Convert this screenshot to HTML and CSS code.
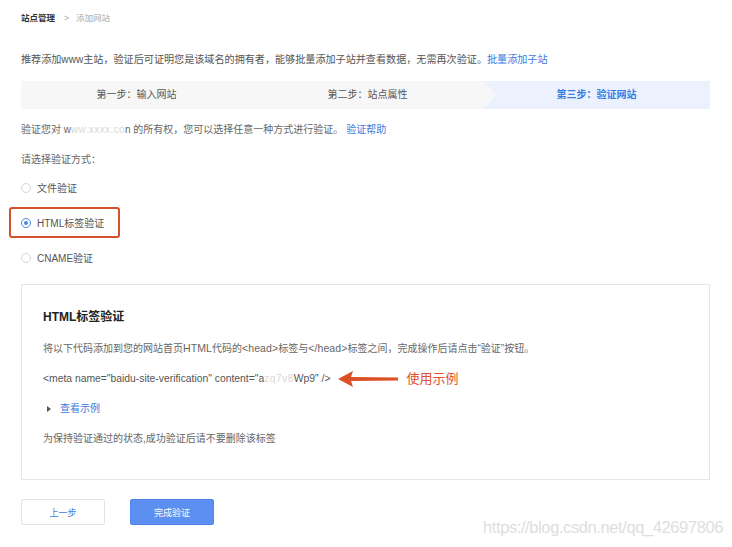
FILE: index.html
```html
<!DOCTYPE html>
<html lang="zh-CN">
<head>
<meta charset="utf-8">
<title>添加网站</title>
<link rel="stylesheet" href="styles.css">
</head>
<body>
<div class="page">
  <div class="crumb"><span class="crumb-root">站点管理</span><span class="crumb-sep">&gt;</span><span class="crumb-cur">添加网站</span></div>
  <p class="intro">推荐添加www主站，验证后可证明您是该域名的拥有者，能够批量添加子站并查看数据，无需再次验证。<a class="link">批量添加子站</a></p>
  <div class="steps">
    <div class="step step-1">第一步：输入网站
      <svg class="chev" width="14" height="28" viewBox="0 0 14 28"><polyline points="1,0 13,14 1,28" fill="none" stroke="#ffffff" stroke-width="0.8" stroke-opacity="0.7"/></svg>
    </div>
    <div class="step step-2">第二步：站点属性</div>
    <div class="step step-3">第三步：验证网站</div>
  </div>
  <p class="owner">验证您对 w<span class="mask">ww.xxxx.co</span>n 的所有权，您可以选择任意一种方式进行验证。 <a class="link">验证帮助</a></p>
  <p class="choose">请选择验证方式：</p>
  <div class="radios">
    <div class="radio-row"><span class="radio"></span><span>文件验证</span></div>
    <div class="radio-row is-marked"><span class="radio is-on"></span><span>HTML标签验证</span></div>
    <div class="radio-row"><span class="radio"></span><span>CNAME验证</span></div>
  </div>
  <div class="card">
    <h3 class="card-title">HTML标签验证</h3>
    <p class="card-desc">将以下代码添加到您的网站首页<span class="lat">HTML</span>代码的<span class="lat">&lt;head&gt;</span>标签与<span class="lat">&lt;/head&gt;</span>标签之间，完成操作后请点击“验证”按钮。</p>
    <div class="card-row meta-row">
      <span class="meta">&lt;meta name="baidu-site-verification" content="a<span class="mask">zq7v8</span>Wp9" /&gt;</span>
      <svg class="red-arrow" width="62" height="18" viewBox="0 0 62 18"><path d="M1 9 L16 1 L14 7 L61 7.6 L61 10.4 L14 11 L16 17 Z" fill="#dd4f24"/></svg>
      <span class="note-red">使用示例</span>
    </div>
    <div class="card-row"><span class="caret"></span><a class="link">查看示例</a></div>
    <div class="card-row">为保持验证通过的状态,成功验证后请不要删除该标签</div>
  </div>
  <div class="actions">
    <button class="btn btn-ghost">上一步</button>
    <button class="btn btn-primary">完成验证</button>
  </div>
  <div class="watermark">https://blog.csdn.net/qq_42697806</div>
</div>
</body>
</html>
```
FILE: styles.css
```css
* { box-sizing: border-box; }
html, body { margin: 0; padding: 0; background: #fff; }
body {
  font-family: "Liberation Sans", "Noto Sans CJK SC", sans-serif;
  font-size: 10px;
  color: #666;
}
p { margin: 0; }
.page {
  position: relative;
  width: 732px;
  height: 547px;
  padding-left: 21px;
  overflow: hidden;
}
.crumb {
  height: 36px;
  line-height: 36px;
  font-size: 8.5px;
}
.crumb-root { color: #333; font-weight: bold; }
.crumb-sep { color: #aaa; margin: 0 7px 0 9px; }
.crumb-cur { color: #aaa; }
.intro {
  margin-top: 14px;
  line-height: 20px;
  color: #555;
  font-size: 10.1px;
}
.link { color: #3a7be3; text-decoration: none; }
.steps {
  margin-top: 11px;
  width: 689px;
  height: 28px;
  display: flex;
  background: #f7f7f7;
}
.step {
  position: relative;
  height: 28px;
  line-height: 28px;
  text-align: center;
  color: #555;
  font-size: 10px;
}
.step-1, .step-2 { width: 231px; }
.step-3 {
  flex: 1;
  background: #ebf2fd;
  color: #3a7be3;
  font-weight: bold;
  clip-path: polygon(0 0, 100% 0, 100% 100%, 0 100%, 13px 50%);
}
.chev { position: absolute; right: -7px; top: 0; }
.owner {
  margin-top: 11px;
  line-height: 20px;
  color: #666;
}
.mask { color: #d8d8d8; letter-spacing: 0.4px; }
.choose {
  margin-top: 10px;
  line-height: 20px;
  color: #666;
}
.radios {
  margin-top: 2px;
  margin-left: -12px;
  display: flex;
  flex-direction: column;
  gap: 4px;
}
.radio-row {
  width: 111px;
  height: 31px;
  display: flex;
  align-items: center;
  gap: 6px;
  padding-left: 10px;
  border: 2px solid transparent;
  border-radius: 3px;
  color: #555;
  font-size: 10px;
}
.radio-row.is-marked {
  border-color: #d4532c;
}
.radio {
  width: 10px;
  height: 10px;
  border: 1px solid #d6d6d6;
  border-radius: 50%;
  display: inline-flex;
  align-items: center;
  justify-content: center;
}
.radio.is-on { border-color: #4a86e8; }
.radio.is-on::after {
  content: "";
  width: 4px;
  height: 4px;
  border-radius: 50%;
  background: #4a86e8;
}
.card {
  margin-top: 11px;
  width: 689px;
  height: 196px;
  border: 1px solid #e6e6e6;
  padding: 22px 0 0 21px;
}
.card-title {
  margin: 0;
  line-height: 20px;
  font-size: 12px;
  font-weight: bold;
  color: #222;
}
.card-desc {
  margin-top: 11px;
  line-height: 20px;
  color: #666;
}
.lat { font-size: 10.5px; letter-spacing: 0.1px; }
.card-row {
  margin-top: 10px;
  height: 20px;
  line-height: 20px;
  display: flex;
  align-items: center;
  color: #666;
}
.meta { color: #555; font-size: 10.35px; }
.red-arrow { margin-left: 6px; }
.note-red {
  margin-left: 8px;
  color: #dd4f24;
  font-size: 13px;
}
.caret {
  width: 0;
  height: 0;
  border-left: 4px solid #555;
  border-top: 3px solid transparent;
  border-bottom: 3px solid transparent;
  margin: 0 9px 0 4px;
}
.actions {
  margin-top: 19px;
  display: flex;
  gap: 25px;
}
.btn {
  width: 84px;
  height: 26px;
  border-radius: 2px;
  font-family: "Liberation Sans", "Noto Sans CJK SC", sans-serif;
  font-size: 9px;
  padding: 0;
}
.btn-ghost {
  background: #fff;
  border: 1px solid #e3e3e3;
  color: #3a7be3;
}
.btn-primary {
  background: #5b8ff0;
  border: 1px solid #5187ec;
  color: #fff;
}
.watermark {
  position: absolute;
  right: 9px;
  top: 518px;
  font-family: "Liberation Sans", sans-serif;
  font-size: 16.5px;
  color: #dedede;
  letter-spacing: -0.4px;
}
```
